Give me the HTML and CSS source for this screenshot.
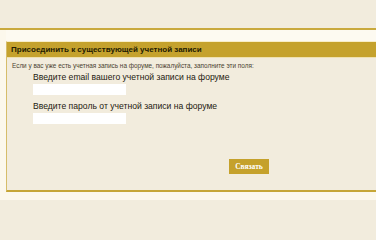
FILE: index.html
```html
<!DOCTYPE html>
<html lang="ru">
<head>
<meta charset="utf-8">
<link rel="stylesheet" href="styles.css">
</head>
<body>
<div class="top"></div>
<div class="frame">
  <div class="strip"></div>
  <div class="panel">
    <div class="head">Присоединить к существующей учетной записи</div>
    <div class="body">
      <p class="note">Если у вас уже есть учетная запись на форуме, пожалуйста, заполните эти поля:</p>
      <div class="field">
        <label class="label">Введите email вашего учетной записи на форуме</label>
        <input class="input" type="text">
      </div>
      <div class="field">
        <label class="label">Введите пароль от учетной записи на форуме</label>
        <input class="input" type="password">
      </div>
      <div class="actions">
        <button class="btn">Связать</button>
      </div>
    </div>
  </div>
</div>
</body>
</html>
```
FILE: styles.css
```css
html, body {
  margin: 0;
  padding: 0;
}
body {
  background: #f2ecdd;
  font-family: "Liberation Sans", Arial, sans-serif;
  width: 376px;
  height: 200px;
  overflow: hidden;
}
.top {
  height: 28px;
  background: #f2ecdd;
}
.frame {
  border-top: 2px solid #c9a93d;
  background: #fcf8ec;
  padding-left: 6px;
  padding-bottom: 10px;
}
.strip {
  height: 11px;
  background: #fdfaf1;
}
.panel {
  background: #f2ecdd;
  border-left: 1px solid #d6bd6a;
  border-bottom: 2px solid #c6a637;
  border-top: 1px solid #f8eec8;
}
.head {
  background: #c5a22d;
  color: #231b02;
  font-weight: bold;
  font-size: 8px;
  height: 15px;
  line-height: 15px;
  padding-left: 4px;
  border-bottom: 1px solid #efe1b0;
}
.body {
  padding: 3px 0 16px 0;
}
.note {
  margin: 0 0 0 5px;
  font-size: 6.4px;
  color: #4a4330;
  line-height: 9px;
}
.field {
  display: flex;
  flex-direction: column;
  margin-left: 26px;
  margin-top: 2px;
}
.field + .field {
  margin-top: 6px;
}
.label {
  font-size: 8.6px;
  color: #1e1a10;
  line-height: 11px;
}
.input {
  width: 93px;
  height: 11px;
  border: 0;
  padding: 0;
  margin-top: 1px;
  background: #ffffff;
}
.actions {
  display: flex;
  padding-left: 222px;
  margin-top: 35px;
}
.btn {
  width: 40px;
  height: 15px;
  background: #c5a12b;
  border: 0;
  padding: 0;
  color: #ffffff;
  font-family: "Liberation Serif", "Times New Roman", serif;
  font-weight: bold;
  font-size: 7.5px;
}
```
